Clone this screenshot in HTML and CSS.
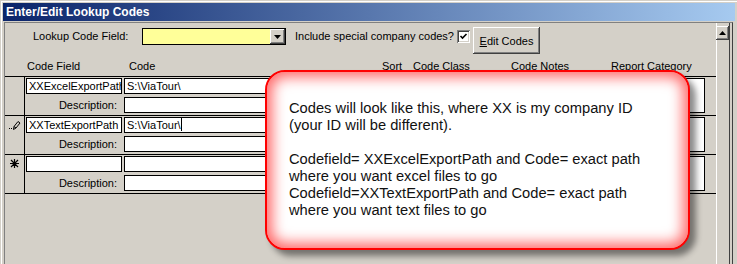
FILE: index.html
```html
<!DOCTYPE html>
<html lang="en">
<head>
    <meta charset="UTF-8">
    <title>Enter/Edit Lookup Codes</title>
    <link rel="stylesheet" href="styles.css">
</head>
<body>
    <div class="window">
        <div class="titlebar">Enter/Edit Lookup Codes</div>
        <div class="client">
            <div class="form">
                <div class="toolbar">
                    <span class="lbl-field">Lookup Code Field:</span>
                    <div class="combo">
                        <span class="combo-value"></span>
                        <span class="combo-btn">
                            <svg width="7" height="4" viewBox="0 0 7 4"><path d="M0 0h7L3.5 4z" fill="#000"/></svg>
                        </span>
                    </div>
                    <span class="lbl-special">Include special company codes?</span>
                    <span class="checkbox">
                        <svg width="13" height="13" viewBox="0 0 13 13">
                            <rect x="0" y="0" width="13" height="13" fill="#808080"/>
                            <rect x="1" y="1" width="12" height="12" fill="#fff"/>
                            <rect x="1" y="1" width="11" height="11" fill="#404040"/>
                            <rect x="2" y="2" width="10" height="10" fill="#d4d0c8"/>
                            <rect x="2" y="2" width="9" height="9" fill="#fff"/>
                            <path d="M3.5 6 L5.5 8 L9.5 4" fill="none" stroke="#000" stroke-width="1.6"/>
                        </svg>
                    </span>
                    <button class="btn"><u>E</u>dit Codes</button>
                </div>

                <div class="colheads">
                    <span class="h-field">Code Field</span>
                    <span class="h-code">Code</span>
                    <span class="h-sort">Sort</span>
                    <span class="h-class">Code Class</span>
                    <span class="h-notes">Code Notes</span>
                    <span class="h-report">Report Category</span>
                </div>

                <div class="record">
                    <div class="selector"></div>
                    <div class="fields">
                        <div class="box f-field">XXExcelExportPath</div>
                        <div class="box f-code">S:\ViaTour\</div>
                        <div class="box f-sort"></div>
                        <div class="box f-class"></div>
                        <div class="box f-notes"></div>
                        <div class="box f-report"></div>
                        <div class="f-desc-lbl">Description:</div>
                        <div class="box f-desc"></div>
                    </div>
                </div>

                <div class="record">
                    <div class="selector">
                        <svg width="13" height="10" viewBox="0 0 13 10">
                            <rect x="1" y="8" width="1" height="1" fill="#000"/>
                            <rect x="3" y="8" width="1" height="1" fill="#000"/>
                            <path d="M5.5 9.5 L6 6.5 L10 1.5 L12 3 L8 8 Z M6 6.5 L8 8" fill="none" stroke="#000" stroke-width="1"/>
                        </svg>
                    </div>
                    <div class="fields">
                        <div class="box f-field">XXTextExportPath</div>
                        <div class="box f-code">S:\ViaTour\<span class="caret"></span></div>
                        <div class="box f-sort"></div>
                        <div class="box f-class"></div>
                        <div class="box f-notes"></div>
                        <div class="box f-report"></div>
                        <div class="f-desc-lbl">Description:</div>
                        <div class="box f-desc"></div>
                    </div>
                </div>

                <div class="record">
                    <div class="selector">
                        <svg width="9" height="9" viewBox="0 0 9 9">
                            <path d="M4.5 0v9M0 4.5h9M1 1l7 7M8 1l-7 7" stroke="#000" stroke-width="1.2"/>
                        </svg>
                    </div>
                    <div class="fields">
                        <div class="box f-field"></div>
                        <div class="box f-code"></div>
                        <div class="box f-sort"></div>
                        <div class="box f-class"></div>
                        <div class="box f-notes"></div>
                        <div class="box f-report"></div>
                        <div class="f-desc-lbl">Description:</div>
                        <div class="box f-desc"></div>
                    </div>
                </div>
            </div>

            <div class="vscroll">
                <div class="scroll-btn">
                    <svg width="7" height="4" viewBox="0 0 7 4"><path d="M3.5 0L7 4H0z" fill="#000"/></svg>
                </div>
            </div>
        </div>
    </div>

    <div class="callout">
        <p>Codes will look like this, where XX is my company ID<br>(your ID will be different).</p>
        <p>Codefield= XXExcelExportPath and Code= exact path<br>where you want excel files to go<br>Codefield=XXTextExportPath and Code= exact path<br>where you want text files to go</p>
    </div>
</body>
</html>
```

FILE: styles.css
```css
* {
    box-sizing: border-box;
}

body {
    margin: 0;
    width: 737px;
    height: 264px;
    overflow: hidden;
    position: relative;
    background-color: #d4d0c8;
    font-family: "Liberation Sans", Arial, sans-serif;
    font-size: 11px;
    color: #000;
}

/* window frame */
.window {
    height: 264px;
    display: flex;
    flex-direction: column;
    border-top: 1px solid #d4d0c8;
    border-left: 1px solid #d4d0c8;
    box-shadow: inset 1px 1px #fff;
    padding: 2px 4px 0 2px;
}

.titlebar {
    height: 18px;
    margin-right: -2px;
    margin-bottom: 1px;
    padding-left: 3px;
    background: linear-gradient(to right, #0a246a, #a6caf0);
    color: #fff;
    font-weight: bold;
    font-size: 12px;
    line-height: 18px;
}

.client {
    flex: 1;
    display: flex;
    margin-left: 1px;
    border-top: 1px solid #808080;
    border-left: 1px solid #808080;
    border-right: 1px solid #404040;
    padding-right: 2px;
}

.form {
    flex: 1;
}

/* top controls */
.toolbar {
    display: flex;
    align-items: flex-start;
    height: 34px;
    padding-top: 4px;
    padding-left: 28px;
}

.lbl-field {
    width: 109px;
    margin-top: 1px;
    line-height: 17px;
}

.combo {
    width: 144px;
    height: 17px;
    margin-top: 1px;
    display: flex;
    border: 1px solid #000;
    background-color: #ffff99;
}

.combo-value {
    flex: 1;
}

.combo-btn {
    width: 15px;
    height: 15px;
    display: flex;
    align-items: center;
    justify-content: center;
    background-color: #d4d0c8;
    box-shadow: inset -1px -1px #404040, inset 1px 1px #fff, inset -2px -2px #808080;
}

.lbl-special {
    width: 162px;
    margin-left: 9px;
    margin-top: 1px;
    line-height: 17px;
}

.checkbox {
    width: 13px;
    height: 13px;
    margin-top: 3px;
    display: flex;
}

.btn {
    width: 67px;
    height: 27px;
    margin-left: 3px;
    padding: 0;
    border: none;
    background-color: #d4d0c8;
    font-family: inherit;
    font-size: 11px;
    color: #000;
    box-shadow: inset -1px -1px #404040, inset 1px 1px #fff, inset -2px -2px #808080;
}

/* column headers */
.colheads {
    height: 20px;
    border-bottom: 1px solid #000;
    display: grid;
    grid-template-columns: 96px 252px 32px 96px 96px 97px;
    column-gap: 2px;
    padding-left: 21px;
    line-height: 19px;
}

.h-field { padding-left: 1px; }
.h-code { padding-left: 5px; }
.h-sort { padding-left: 4px; }
.h-class { padding-left: 1px; }
.h-notes { padding-left: 1px; }
.h-report { padding-left: 3px; }

/* records */
.record {
    display: flex;
    height: 39px;
    border-bottom: 1px solid #000;
}

.selector {
    width: 20px;
    border-right: 1px solid #000;
    display: flex;
    justify-content: center;
    padding-top: 4px;
    padding-right: 1px;
}

.fields {
    display: grid;
    grid-template-columns: 96px 252px 32px 96px 96px 97px;
    grid-template-rows: 16px 16px;
    column-gap: 2px;
    row-gap: 3px;
    padding-top: 1px;
    padding-left: 1px;
}

.box {
    border: 1px solid #000;
    background-color: #fff;
    padding-left: 2px;
    line-height: 14px;
    white-space: nowrap;
    overflow: hidden;
}

.f-report {
    grid-column: 6;
    grid-row: 1 / 3;
}

.f-desc-lbl {
    grid-column: 1;
    grid-row: 2;
    text-align: right;
    padding-right: 5px;
    line-height: 16px;
}

.f-desc {
    grid-column: 2 / 6;
    grid-row: 2;
}

.caret {
    display: inline-block;
    width: 1px;
    height: 13px;
    vertical-align: top;
    background-color: #000;
}

/* scrollbar */
.vscroll {
    width: 14px;
    border-left: 1px solid #fff;
    border-right: 1px solid #404040;
    padding-top: 3px;
}

.scroll-btn {
    width: 13px;
    height: 14px;
    margin-left: -1px;
    display: flex;
    align-items: center;
    justify-content: center;
    background-color: #d4d0c8;
    box-shadow: inset -1px -1px #404040, inset 1px 1px #fff, inset -2px -2px #808080;
}

/* note bubble over the form */
.callout {
    position: absolute;
    left: 265px;
    top: 70px;
    width: 425px;
    height: 180px;
    padding: 28px 0 0 22px;
    border: 2px solid #ff0000;
    border-radius: 20px;
    background-color: #fff;
    box-shadow: inset 0 0 14px 5px rgba(255, 0, 0, 0.6), 6px 6px 6px rgba(0, 0, 0, 0.45);
    font-size: 14.7px;
    line-height: 17px;
    color: #111;
}

.callout p {
    margin: 0 0 17px 0;
}
```
